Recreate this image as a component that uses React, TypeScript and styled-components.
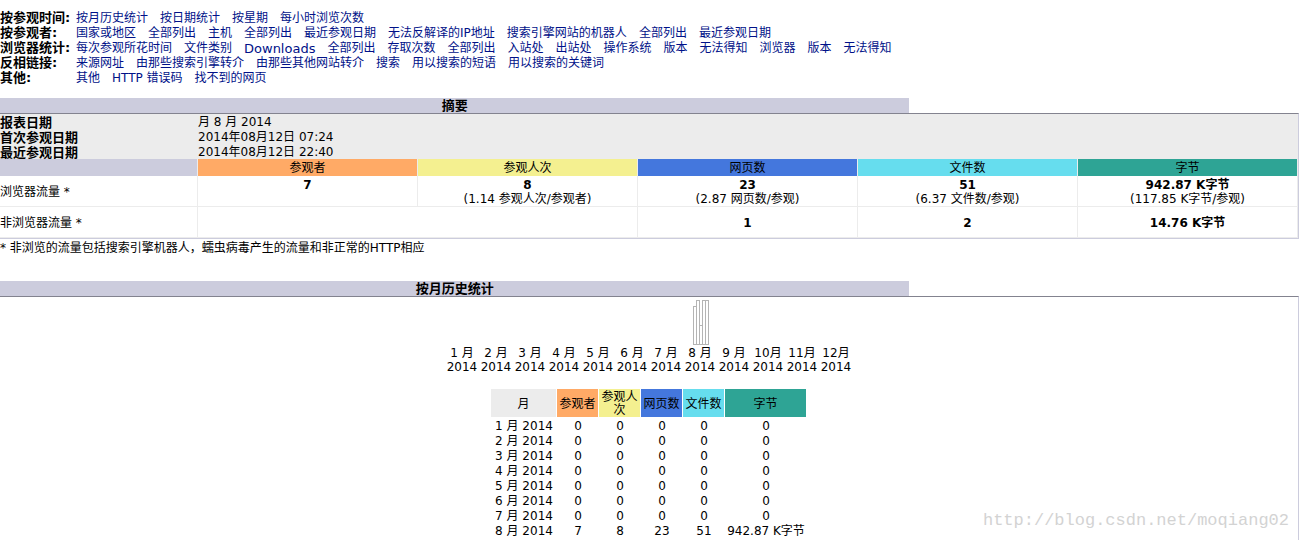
import React from "react";
import styled, { createGlobalStyle } from "styled-components";

const colors = {
  frame: "#ccccdd",
  line: "#83838f",
  rule: "#ececec",
  visitors: "#ffaa66",
  visits: "#f4f090",
  pages: "#4477dd",
  hits: "#66ddee",
  bytes: "#2ea495",
};

const GlobalStyle = createGlobalStyle`
  *, *::before, *::after { box-sizing: border-box; }
  body {
    margin: 0;
    background: #fff;
    color: #000;
    font-family: "DejaVu Sans", "Noto Sans CJK SC", sans-serif;
    font-size: 12px;
    line-height: 15px;
  }
`;

const Page = styled.div`
  position: relative;
  display: flex;
  flex-direction: column;
  min-height: 100vh;
  padding: 10px 1px 0 0;
`;

const Menu = styled.nav`
  display: flex;
  flex-direction: column;
  margin-bottom: 13px;
`;

const MenuRow = styled.div`
  display: grid;
  grid-template-columns: 76px 1fr;
`;

const MenuLabel = styled.b`
  font-size: 13px;
  white-space: nowrap;
`;

const MenuLinks = styled.div`
  display: flex;
  flex-wrap: wrap;
  column-gap: 12px;
  padding-top: 2px;
  line-height: 13px;
`;

const MenuLink = styled.a<{ $latin?: boolean }>`
  color: #001188;
  font-size: ${(p) => (p.$latin ? 13 : 12)}px;
  text-decoration: none;
  &:hover { text-decoration: underline; }
`;

const Section = styled.section<{ $grow?: boolean }>`
  display: flex;
  flex-direction: column;
  flex: ${(p) => (p.$grow ? "1 0 auto" : "none")};
`;

const SectionTitle = styled.h2`
  width: 70%;
  height: 15px;
  margin: 0;
  background: ${colors.frame};
  font-size: 13px;
  line-height: 16px;
  text-align: center;
`;

const Panel = styled.div<{ $open?: boolean }>`
  flex: 1 0 auto;
  border-top: 1px solid ${colors.line};
  border-right: 1px solid ${colors.frame};
  border-bottom: ${(p) => (p.$open ? "0" : `1px solid ${colors.frame}`)};
`;

const SummaryTable = styled.table`
  width: 100%;
  table-layout: fixed;
  border-collapse: separate;
  border-spacing: 0;
`;

const LabelColumn = styled.col`
  width: 198px;
`;

const PeriodLabel = styled.th`
  padding: 2px 0 0;
  background: ${colors.rule};
  font-size: 13px;
  line-height: 13px;
  text-align: left;
`;

const PeriodValue = styled.td`
  padding: 2px 0 0;
  background: ${colors.rule};
  line-height: 13px;
`;

const MetricHead = styled.th<{ $bg: string }>`
  height: 17px;
  padding: 2px 0 0;
  border-right: 1px solid ${colors.rule};
  background: ${(p) => p.$bg};
  font-weight: normal;
  text-align: center;
`;

const TrafficLabel = styled.th`
  height: 31px;
  padding: 2px 0 0;
  border-right: 1px solid ${colors.rule};
  border-bottom: 1px solid ${colors.rule};
  font-weight: normal;
  text-align: left;
`;

const TrafficCell = styled.td<{ $top?: boolean }>`
  padding: 2px 0 0;
  border-right: 1px solid ${colors.rule};
  border-bottom: 1px solid ${colors.rule};
  line-height: 14px;
  text-align: center;
  vertical-align: ${(p) => (p.$top ? "top" : "middle")};
`;

const Ratio = styled.div``;

const Footnote = styled.p`
  margin: 0 0 25px;
  padding-top: 2px;
`;

const Chart = styled.div`
  display: grid;
  grid-template-columns: repeat(12, 34px);
  justify-content: center;
  padding-top: 2px;
`;

const ChartMonth = styled.div`
  display: flex;
  flex-direction: column;
  line-height: 14px;
  text-align: center;
`;

const BarGroup = styled.div`
  display: flex;
  align-items: flex-end;
  justify-content: center;
  height: 46px;
  margin-bottom: 1px;
`;

const Bar = styled.span`
  width: 4px;
  margin-right: -1px;
  border: 1px solid #b4b4b4;
`;

const MonthTable = styled.table`
  width: 316px;
  margin: 15px auto 0;
  table-layout: fixed;
  border-collapse: separate;
  border-spacing: 0;
  text-align: center;
`;

const MonthColumn = styled.col<{ $width: number }>`
  width: ${(p) => p.$width}px;
`;

const MonthHead = styled.th<{ $bg: string }>`
  height: 29px;
  padding: 2px 0 0;
  border-right: 1px solid #fff;
  border-bottom: 1px solid #fff;
  background: ${(p) => p.$bg};
  font-weight: normal;
  line-height: 13px;
`;

const MonthCell = styled.td`
  padding: 2px 0 0;
  line-height: 13px;
  white-space: nowrap;
`;

const Watermark = styled.div`
  position: absolute;
  right: 11px;
  bottom: 9px;
  color: #d3d3d3;
  font-family: "Liberation Mono", monospace;
  font-size: 17px;
  line-height: 20px;
`;

const menu = [
  { label: "按参观时间:", links: ["按月历史统计", "按日期统计", "按星期", "每小时浏览次数"] },
  {
    label: "按参观者:",
    links: ["国家或地区", "全部列出", "主机", "全部列出", "最近参观日期", "无法反解译的IP地址", "搜索引擎网站的机器人", "全部列出", "最近参观日期"],
  },
  {
    label: "浏览器统计:",
    links: ["每次参观所花时间", "文件类别", "Downloads", "全部列出", "存取次数", "全部列出", "入站处", "出站处", "操作系统", "版本", "无法得知", "浏览器", "版本", "无法得知"],
  },
  { label: "反相链接:", links: ["来源网址", "由那些搜索引擎转介", "由那些其他网站转介", "搜索", "用以搜索的短语", "用以搜索的关键词"] },
  { label: "其他:", links: ["其他", "HTTP 错误码", "找不到的网页"] },
];

const period = [
  ["报表日期", "月 8 月 2014"],
  ["首次参观日期", "2014年08月12日 07:24"],
  ["最近参观日期", "2014年08月12日 22:40"],
];

const metrics = [
  { name: "参观者", color: colors.visitors, total: "7", ratio: "" },
  { name: "参观人次", color: colors.visits, total: "8", ratio: "(1.14 参观人次/参观者)" },
  { name: "网页数", color: colors.pages, total: "23", ratio: "(2.87 网页数/参观)" },
  { name: "文件数", color: colors.hits, total: "51", ratio: "(6.37 文件数/参观)" },
  { name: "字节", color: colors.bytes, total: "942.87 K字节", ratio: "(117.85 K字节/参观)" },
];

const barHeights = [39, 45, 20, 45, 45];
const months = Array.from({ length: 12 }, (_, i) => i + 1);
const monthColumns = [66, 42, 42, 42, 42, 82];

export default function App() {
  return (
    <>
      <GlobalStyle />
      <Page>
        <Menu>
          {menu.map((row) => (
            <MenuRow key={row.label}>
              <MenuLabel>{row.label}</MenuLabel>
              <MenuLinks>
                {row.links.map((link, i) => (
                  <MenuLink key={i} href="#" $latin={link === "Downloads"}>
                    {link}
                  </MenuLink>
                ))}
              </MenuLinks>
            </MenuRow>
          ))}
        </Menu>

        <Section>
          <SectionTitle>摘要</SectionTitle>
          <Panel>
            <SummaryTable>
              <colgroup>
                <LabelColumn />
                <col span={5} />
              </colgroup>
              <tbody>
                {period.map(([label, value]) => (
                  <tr key={label}>
                    <PeriodLabel scope="row">{label}</PeriodLabel>
                    <PeriodValue colSpan={5}>{value}</PeriodValue>
                  </tr>
                ))}
                <tr>
                  <MetricHead as="td" $bg={colors.frame} />
                  {metrics.map((m) => (
                    <MetricHead key={m.name} scope="col" $bg={m.color}>
                      {m.name}
                    </MetricHead>
                  ))}
                </tr>
                <tr>
                  <TrafficLabel scope="row">浏览器流量 *</TrafficLabel>
                  {metrics.map((m) => (
                    <TrafficCell key={m.name} $top>
                      <b>{m.total}</b>
                      {m.ratio && <Ratio>{m.ratio}</Ratio>}
                    </TrafficCell>
                  ))}
                </tr>
                <tr>
                  <TrafficLabel scope="row">非浏览器流量 *</TrafficLabel>
                  <TrafficCell colSpan={2} />
                  <TrafficCell><b>1</b></TrafficCell>
                  <TrafficCell><b>2</b></TrafficCell>
                  <TrafficCell><b>14.76 K字节</b></TrafficCell>
                </tr>
              </tbody>
            </SummaryTable>
          </Panel>
          <Footnote>* 非浏览的流量包括搜索引擎机器人，蠕虫病毒产生的流量和非正常的HTTP相应</Footnote>
        </Section>

        <Section $grow>
          <SectionTitle>按月历史统计</SectionTitle>
          <Panel $open>
            <Chart>
              {months.map((m) => (
                <ChartMonth key={m}>
                  <BarGroup>
                    {m === 8 && barHeights.map((h, i) => <Bar key={i} style={{ height: h }} />)}
                  </BarGroup>
                  <span>{m < 10 ? `${m} 月` : `${m}月`}</span>
                  <span>2014</span>
                </ChartMonth>
              ))}
            </Chart>
            <MonthTable>
              <colgroup>
                {monthColumns.map((w, i) => (
                  <MonthColumn key={i} $width={w} />
                ))}
              </colgroup>
              <thead>
                <tr>
                  <MonthHead scope="col" $bg={colors.rule}>月</MonthHead>
                  {metrics.map((m) => (
                    <MonthHead key={m.name} scope="col" $bg={m.color}>
                      {m.name}
                    </MonthHead>
                  ))}
                </tr>
              </thead>
              <tbody>
                {months.slice(0, 8).map((m) => (
                  <tr key={m}>
                    <MonthCell>{m} 月 2014</MonthCell>
                    {metrics.map((metric) => (
                      <MonthCell key={metric.name}>{m === 8 ? metric.total : "0"}</MonthCell>
                    ))}
                  </tr>
                ))}
              </tbody>
            </MonthTable>
          </Panel>
        </Section>
        <Watermark>http://blog.csdn.net/moqiang02</Watermark>
      </Page>
    </>
  );
}
